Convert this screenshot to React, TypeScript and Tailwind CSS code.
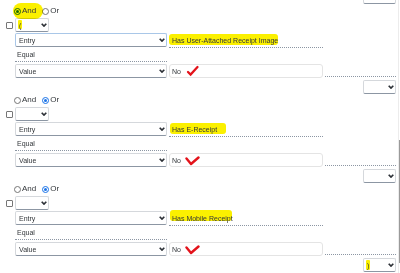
import React from "react";

function Chevron() {
  return (
    <svg width="6" height="4" viewBox="0 0 6 4" className="shrink-0">
      <path d="M0.7 0.7L3 3.1L5.3 0.7" fill="none" stroke="#2c3036" strokeWidth="1.6" />
    </svg>
  );
}

function Select({
  className = "",
  text = "",
  focus = false,
  children,
}: {
  className?: string;
  text?: string;
  focus?: boolean;
  children?: React.ReactNode;
}) {
  return (
    <div
      className={`flex h-[14px] shrink-0 items-center justify-between rounded-[2px] border bg-white pl-[3px] pr-[1px] ${
        focus ? "border-x-[#a9c7e8] border-t-[#a9c7e8]" : "border-x-[#d5d8dc] border-t-[#d5d8dc]"
      } border-b-[#8c96a3] ${className}`}
    >
      <span className="relative leading-none">
        {children}
        {text}
      </span>
      <Chevron />
    </div>
  );
}

function Radio({ checked, className = "" }: { checked: boolean; className?: string }) {
  return checked ? (
    <span
      className={`flex h-[7px] w-[7px] shrink-0 items-center justify-center rounded-full border border-[#1a73e8] bg-white ${className}`}
    >
      <span className="h-[3px] w-[3px] rounded-full bg-[#1a73e8]" />
    </span>
  ) : (
    <span className={`h-[7px] w-[7px] shrink-0 rounded-full border border-[#767676] bg-white ${className}`} />
  );
}

function Checkbox() {
  return <span className="block h-[7px] w-[7px] rounded-[1px] border border-[#767676] bg-white" />;
}

function Check() {
  return (
    <svg width="14" height="12" viewBox="0 0 14 12" className="ml-[5px] shrink-0">
      <path d="M2 7 L4.6 9.6 L11.5 2" fill="none" stroke="#e3131b" strokeWidth="2.3" strokeLinecap="round" />
    </svg>
  );
}

function Vee() {
  return (
    <svg width="15" height="10" viewBox="0 0 15 10" className="ml-[4px] mt-[2px] shrink-0">
      <path d="M1.5 2.5 L6 8 L13.5 1.5" fill="none" stroke="#e3131b" strokeWidth="2.4" strokeLinecap="round" strokeLinejoin="round" />
    </svg>
  );
}

function Highlight({ className }: { className: string }) {
  return <span className={`pointer-events-none absolute bg-[#fbf000] mix-blend-multiply ${className}`} />;
}

function Section({
  andChecked,
  andHighlight = false,
  entryFocus = false,
  label,
  labelHl,
  mark,
  leftParen = false,
  rightParen = false,
}: {
  andChecked: boolean;
  andHighlight?: boolean;
  entryFocus?: boolean;
  label: string;
  labelHl: string;
  mark: "check" | "vee";
  leftParen?: boolean;
  rightParen?: boolean;
}) {
  return (
    <div className="flex flex-col">
      <div className="flex h-[12px] items-center pl-[14px] text-[8px]">
        <div className="relative flex items-center">
          {andHighlight && <Highlight className="left-[-1px] top-[-4px] h-[16px] w-[30px] rounded-[8px]" />}
          <Radio checked={andChecked} />
          <span className="relative ml-[1px] leading-none">And</span>
        </div>
        <Radio className="ml-[6px]" checked={!andChecked} />
        <span className="ml-[1px] leading-none">Or</span>
      </div>
      <div className="mt-[1px] flex items-center">
        <div className="w-[15px] pl-[6px]">
          <Checkbox />
        </div>
        <Select className="w-[34px]">
          {leftParen && <Highlight className="left-[-1px] top-[-2px] h-[9px] w-[4px] rounded-[1px]" />}
          <span className="relative">{leftParen ? "(" : ""}</span>
        </Select>
      </div>
      <div className="mt-[1px] flex items-start pl-[15px]">
        <Select className="w-[152px]" text="Entry" focus={entryFocus} />
        <div className="ml-[2px] flex h-[15px] w-[154px] items-center border-b border-dotted border-[#8c96a3] pl-[3px]">
          <span className="relative leading-none">
            <Highlight className={labelHl} />
            <span className="relative">{label}</span>
          </span>
        </div>
      </div>
      <div className="ml-[15px] flex h-[14px] w-[152px] items-center border-b border-dotted border-[#8c96a3] pl-[2px] leading-none">
        Equal
      </div>
      <div className="mt-[2px] flex items-start pl-[15px]">
        <Select className="w-[152px]" text="Value" />
        <div className="ml-[2px] flex h-[14px] w-[154px] items-center rounded-[3px] border border-[#e4e4e4] pl-[2px]">
          <span className="leading-none">No</span>
          {mark === "check" ? <Check /> : <Vee />}
        </div>
        <div className="ml-[2px] h-[13px] w-[71px] border-b border-dotted border-[#8c96a3]" />
      </div>
      <div className="mt-[2px] flex justify-end pr-[4px]">
        <Select className="w-[33px]">
          {rightParen && <Highlight className="left-[-1px] top-[-2px] h-[10px] w-[4px] rounded-[1px]" />}
          <span className="relative">{rightParen ? ")" : ""}</span>
        </Select>
      </div>
    </div>
  );
}

export default function App() {
  return (
    <div className="relative h-[273px] w-[400px] overflow-hidden bg-white font-['Liberation_Sans',Arial,sans-serif] text-[7px] text-[#32363a]">
      <div className="flex h-[5px] justify-end pr-[4px]">
        <div className="h-[4px] w-[33px] rounded-b-[2px] border-x border-b border-x-[#d5d8dc] border-b-[#8c96a3] bg-white" />
      </div>
      <Section
        andChecked={true}
        andHighlight
        entryFocus
        label="Has User-Attached Receipt Image"
        labelHl="left-[-3px] top-[-3px] h-[11px] w-[109px] rounded-[3px]"
        mark="check"
        leftParen
      />
      <Section
        andChecked={false}
        label="Has E-Receipt"
        labelHl="left-[-2px] top-[-3px] h-[11px] w-[56px] rounded-[3px]"
        mark="vee"
      />
      <Section
        andChecked={false}
        label="Has Mobile Receipt"
        labelHl="left-[-2px] top-[-5px] h-[11px] w-[62px] rounded-[3px]"
        mark="vee"
        rightParen
      />
      <div className="absolute right-0 top-0 h-full w-[2px] border-l border-[#ececec]" />
      <div className="absolute right-0 top-[140px] h-[123px] w-[1px] bg-[#9a9a9a]" />
    </div>
  );
}
